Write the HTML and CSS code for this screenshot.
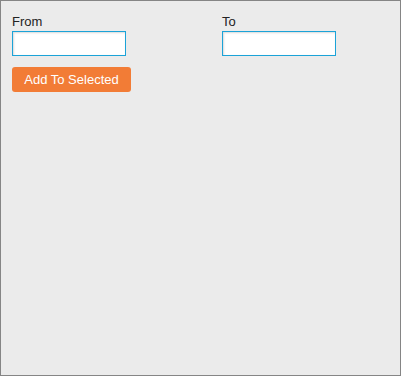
FILE: index.html
```html
<!DOCTYPE html>
<html lang="en">
<head>
  <meta charset="UTF-8" />
  <title>Date range</title>
  <link rel="stylesheet" href="styles.css">
</head>
<body>
  <div class="frame">
    <div class="range">
      <div class="field">
        <label for="from">From</label>
        <input id="from" type="text" />
      </div>
      <div class="field">
        <label for="to">To</label>
        <input id="to" type="text" />
      </div>
    </div>
    <button class="add-btn">Add To Selected</button>
  </div>
</body>
</html>
```

FILE: styles.css
```css
html, body {
  margin: 0;
  height: 100%;
}
body {
  font-family: "Liberation Sans", Arial, sans-serif;
  background: #ebebeb;
}
.frame {
  box-sizing: border-box;
  height: 376px;
  width: 401px;
  border: 1px solid #858585;
  padding: 13px 11px;
}
.range {
  display: grid;
  grid-template-columns: 210px 1fr;
}
.field label {
  display: block;
  font-size: 13px;
  line-height: 15px;
  color: #222;
  margin-bottom: 2px;
}
.field input {
  box-sizing: border-box;
  width: 114px;
  height: 25px;
  margin: 0;
  padding: 2px 4px;
  border: 1px solid #1ba3d8;
  background: #fff;
  box-shadow: inset 1px 1px 2px rgba(0,0,0,0.15);
  outline: none;
  font: 13px "Liberation Sans", Arial, sans-serif;
}
.add-btn {
  display: block;
  margin-top: 11px;
  width: 119px;
  height: 25px;
  padding: 0;
  border: none;
  border-radius: 3px;
  background: #f27c36;
  color: #fff;
  font: 13px "Liberation Sans", Arial, sans-serif;
  cursor: pointer;
}
```
